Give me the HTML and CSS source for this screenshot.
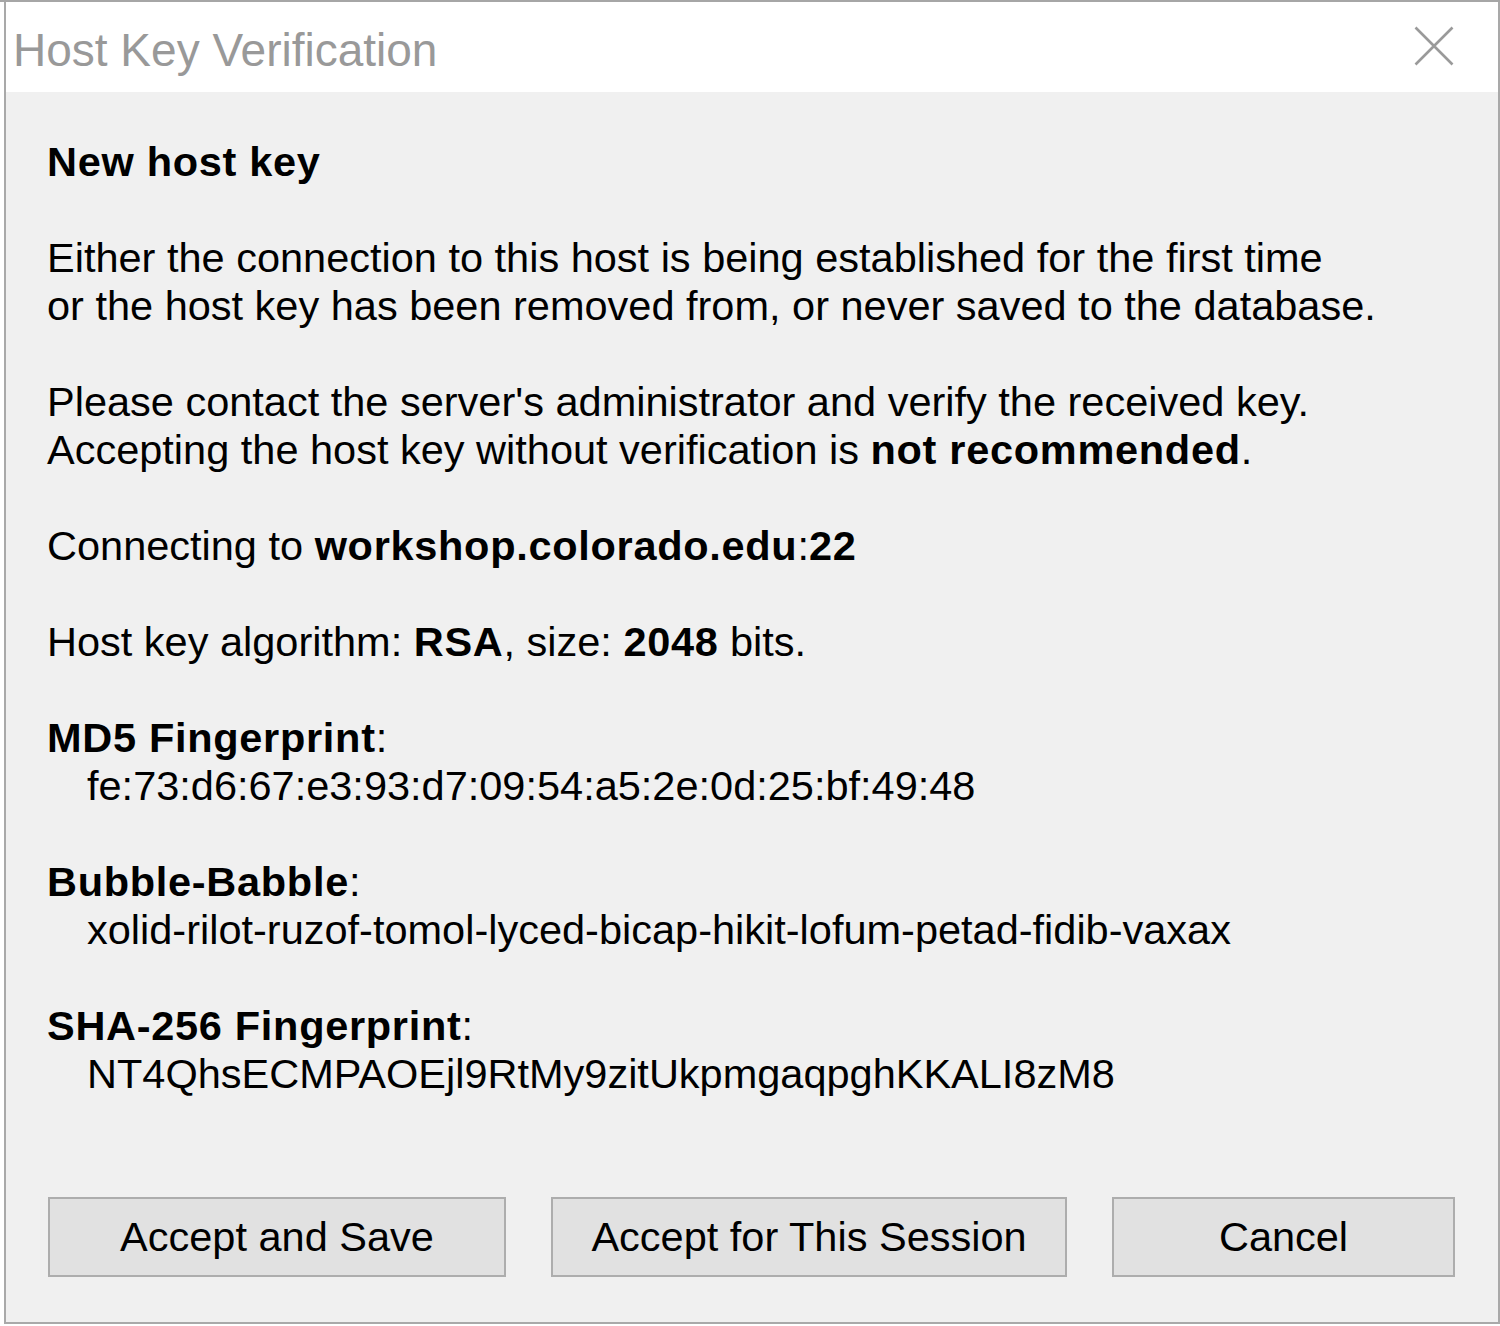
FILE: index.html
```html
<!DOCTYPE html>
<html lang="en">
<head>
<meta charset="utf-8">
<title>Host Key Verification</title>
<link rel="stylesheet" href="styles.css">
</head>
<body>
<div class="screen">
  <div class="window">
    <div class="titlebar">
      <div class="title">Host Key Verification</div>
      <svg class="close" width="40" height="40" viewBox="0 0 40 40" aria-hidden="true">
        <path d="M1.5 1.5 L38.5 38.5 M38.5 1.5 L1.5 38.5" stroke="#9a9a9a" stroke-width="2.6" fill="none"/>
      </svg>
    </div>
    <div class="body">
      <div class="content">
        <p class="line heading">New host key</p>
        <p class="para">Either the connection to this host is being established for the first time<br>or the host key has been removed from, or never saved to the database.</p>
        <p class="para">Please contact the server's administrator and verify the received key.<br>Accepting the host key without verification is <b>not recommended</b>.</p>
        <p class="para">Connecting to <b>workshop.colorado.edu</b>:<b>22</b></p>
        <p class="para">Host key algorithm: <b>RSA</b>, size: <b>2048</b> bits.</p>
        <div class="para">
          <div class="line"><b>MD5 Fingerprint</b>:</div>
          <div class="line value">fe:73:d6:67:e3:93:d7:09:54:a5:2e:0d:25:bf:49:48</div>
        </div>
        <div class="para">
          <div class="line"><b>Bubble-Babble</b>:</div>
          <div class="line value">xolid-rilot-ruzof-tomol-lyced-bicap-hikit-lofum-petad-fidib-vaxax</div>
        </div>
        <div class="para">
          <div class="line"><b>SHA-256 Fingerprint</b>:</div>
          <div class="line value">NT4QhsECMPAOEjl9RtMy9zitUkpmgaqpghKKALI8zM8</div>
        </div>
      </div>
      <div class="actions">
        <button class="btn btn-save">Accept and Save</button>
        <button class="btn btn-session">Accept for This Session</button>
        <button class="btn btn-cancel">Cancel</button>
      </div>
    </div>
  </div>
</div>
</body>
</html>
```

FILE: styles.css
```css
html, body {
  margin: 0;
  padding: 0;
  background: #ffffff;
}

body {
  width: 1500px;
  height: 1326px;
  overflow: hidden;
  font-family: "Liberation Sans", Arial, sans-serif;
  color: #000;
}

.screen {
  border-top: 2px solid #a6a6a6;
  padding-left: 4px;
}

.window {
  border-left: 2px solid #a9a9a9;
  border-right: 2px solid #a9a9a9;
  border-bottom: 2px solid #a9a9a9;
  background: #f0f0f0;
  display: flex;
  flex-direction: column;
}

.titlebar {
  height: 90px;
  background: #ffffff;
  display: flex;
  align-items: flex-start;
}

.title {
  font-size: 46px;
  line-height: 83px;
  margin-top: 7px;
  margin-left: 7px;
  color: #999999;
}

.close {
  margin-left: auto;
  margin-right: 44px;
  margin-top: 24px;
}

.body {
  height: 1230px;
  background: #f0f0f0;
}

.content {
  padding: 46px 0 0 41px;
  font-size: 41.5px;
  line-height: 48px;
}

.line,
.para {
  margin: 0;
}

.heading {
  font-weight: bold;
  letter-spacing: 0.7px;
  margin-bottom: 48px;
}

.para {
  margin-bottom: 48px;
}

.para:last-child {
  margin-bottom: 0;
}

.value {
  padding-left: 40px;
}

b {
  font-weight: bold;
  letter-spacing: 0.7px;
}

.actions {
  display: flex;
  gap: 45px;
  margin-top: 99px;
  padding-left: 42px;
}

.btn {
  height: 80px;
  box-sizing: border-box;
  border: 2px solid #adadad;
  background: #e1e1e1;
  font-family: "Liberation Sans", Arial, sans-serif;
  font-size: 41.5px;
  color: #000;
  padding: 0;
  border-radius: 0;
}

.btn-save {
  width: 458px;
}

.btn-session {
  width: 516px;
}

.btn-cancel {
  width: 343px;
}
```
